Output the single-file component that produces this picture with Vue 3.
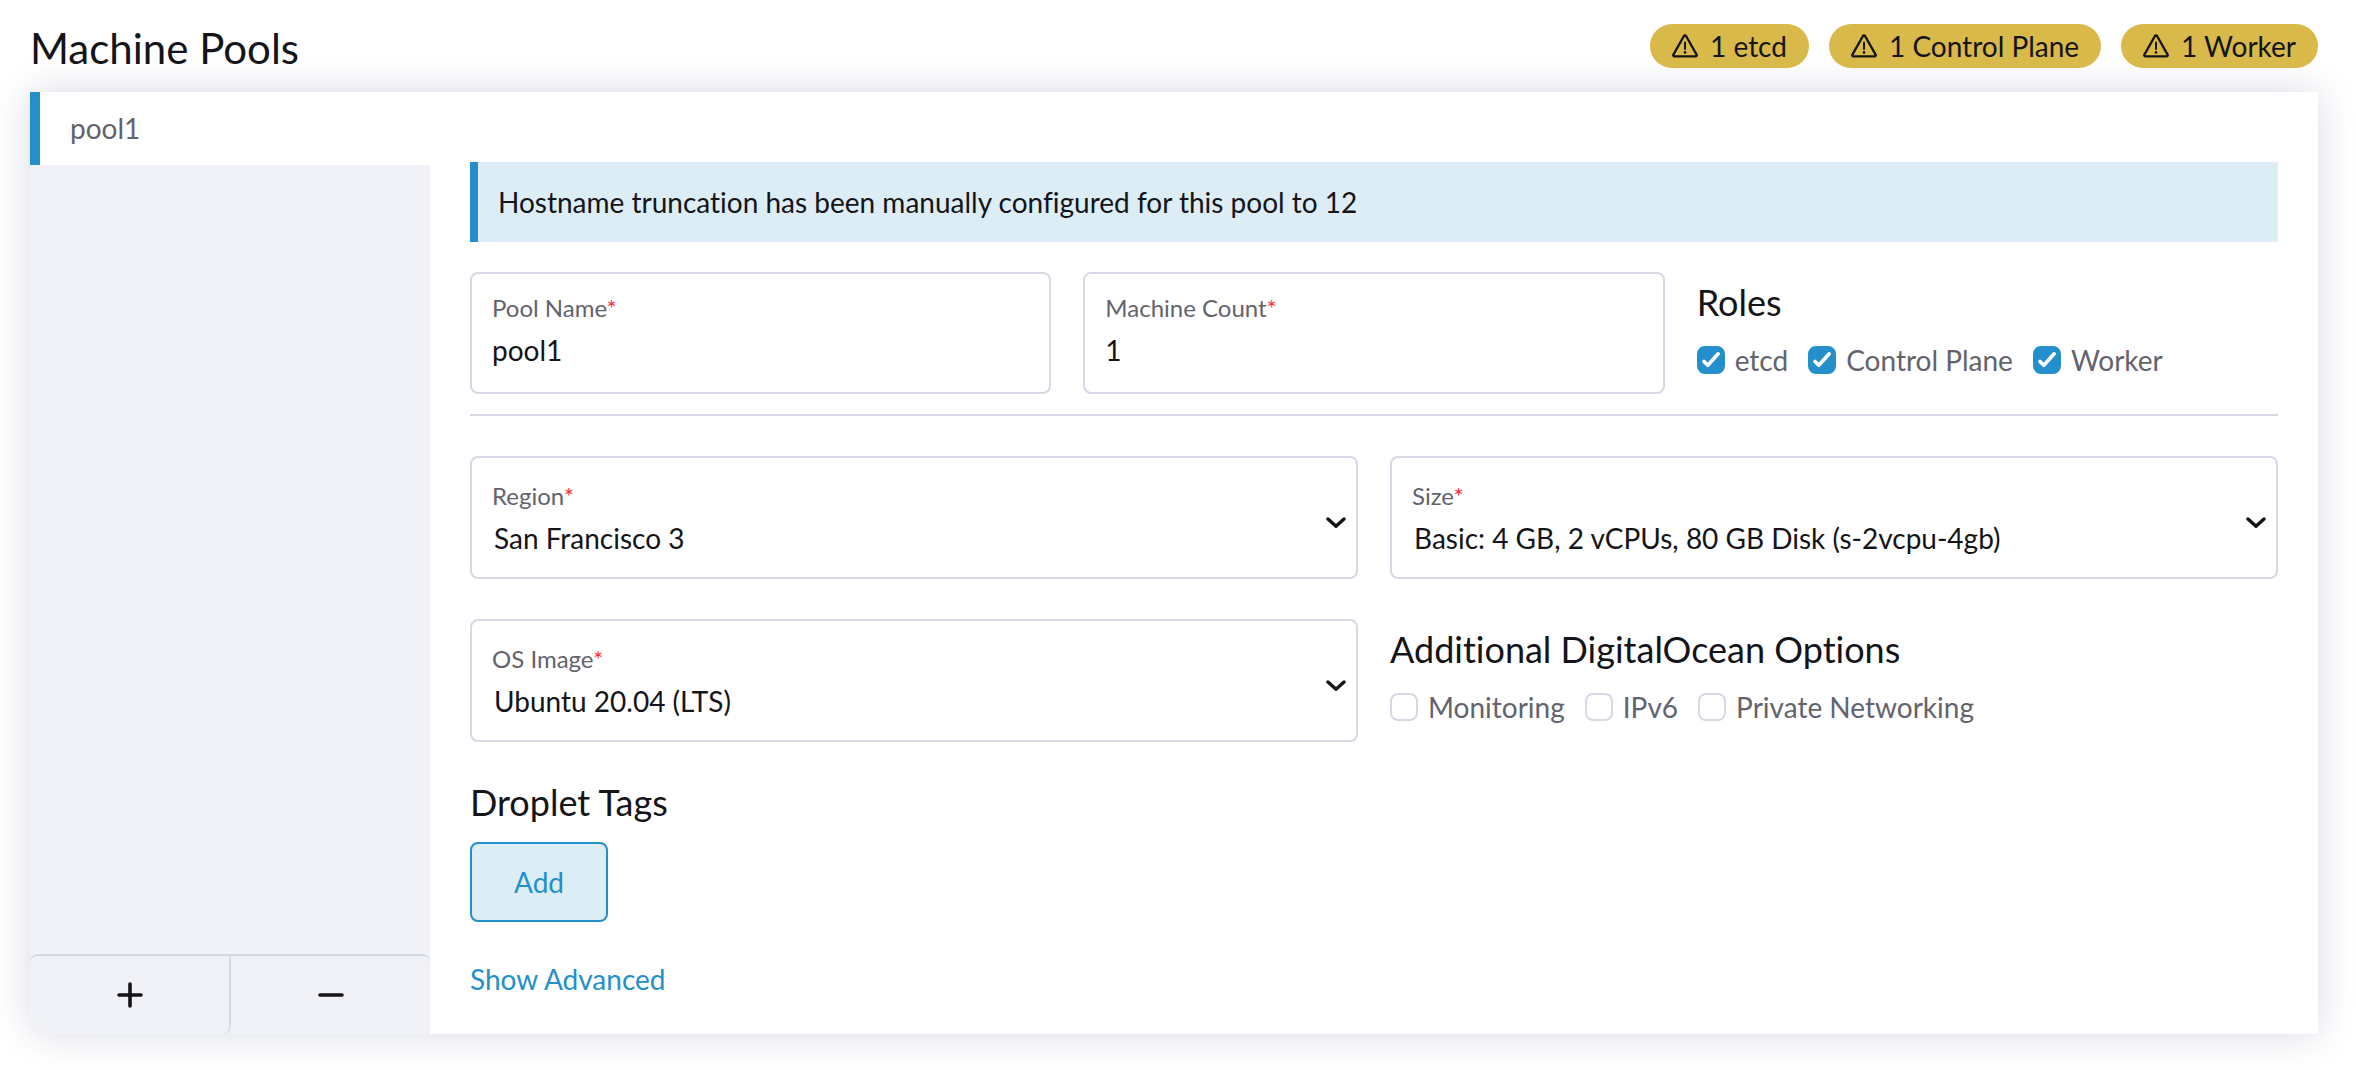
<script setup>
import { ref, reactive } from 'vue'

const badges = ['1 etcd', '1 Control Plane', '1 Worker']

const poolName = ref('pool1')
const machineCount = ref('1')
const region = ref('San Francisco 3')
const size = ref('Basic: 4 GB, 2 vCPUs, 80 GB Disk (s-2vcpu-4gb)')
const image = ref('Ubuntu 20.04 (LTS)')

const roles = reactive([
  { label: 'etcd', on: true },
  { label: 'Control Plane', on: true },
  { label: 'Worker', on: true },
])
const options = reactive([
  { label: 'Monitoring', on: false },
  { label: 'IPv6', on: false },
  { label: 'Private Networking', on: false },
])
</script>

<template>
  <main class="page">
    <header class="header">
      <h2>Machine Pools</h2>
      <ul class="badges">
        <li v-for="badge in badges" :key="badge" class="badge">
          <svg width="26" height="24" viewBox="0 0 26 24" fill="none" aria-hidden="true">
            <path d="M11.8 2.2a1.4 1.4 0 0 1 2.4 0L24.6 20.6a1.2 1.2 0 0 1-1 1.8H2.4a1.2 1.2 0 0 1-1-1.8Z" stroke="currentColor" stroke-width="2.3" stroke-linejoin="round" />
            <path d="M13 8.5v6.5" stroke="currentColor" stroke-width="2" stroke-linecap="round" />
            <circle cx="13" cy="18.4" r="1.3" fill="currentColor" />
          </svg>
          {{ badge }}
        </li>
      </ul>
    </header>

    <div class="panel">
      <nav class="side" aria-label="Pools">
        <a class="tab" href="#pool1">pool1</a>
        <div class="side-actions">
          <button type="button" class="add-pool" aria-label="Add pool">
            <svg width="26" height="26" viewBox="0 0 26 26" aria-hidden="true">
              <path d="M13 2v22M2 13h22" stroke="currentColor" stroke-width="3.6" stroke-linecap="round" />
            </svg>
          </button>
          <button type="button" class="remove-pool" aria-label="Remove pool">
            <svg width="26" height="26" viewBox="0 0 26 26" aria-hidden="true">
              <path d="M2 13h22" stroke="currentColor" stroke-width="3.6" stroke-linecap="round" />
            </svg>
          </button>
        </div>
      </nav>

      <section class="content">
        <div class="banner">Hostname truncation has been manually configured for this pool to 12</div>

        <div class="row thirds">
          <div class="field">
            <label for="pool-name">Pool Name<span class="req">*</span></label>
            <input id="pool-name" v-model="poolName" type="text" />
          </div>
          <div class="field">
            <label for="machine-count">Machine Count<span class="req">*</span></label>
            <input id="machine-count" v-model="machineCount" type="text" inputmode="numeric" />
          </div>
          <div class="group">
            <h3>Roles</h3>
            <div class="checks">
              <label v-for="role in roles" :key="role.label" class="check">
                <input v-model="role.on" type="checkbox" />
                <svg class="tick" viewBox="0 0 28 28" aria-hidden="true">
                  <path d="M7 15.5 10.8 19.3 21.2 7.8" />
                </svg>
                {{ role.label }}
              </label>
            </div>
          </div>
        </div>

        <hr />

        <div class="row halves">
          <div class="field select">
            <label for="region">Region<span class="req">*</span></label>
            <select id="region" v-model="region"><option>San Francisco 3</option></select>
            <svg class="chevron" viewBox="0 0 20 12" aria-hidden="true"><path d="M2 2 10 9.2 18 2" /></svg>
          </div>
          <div class="field select">
            <label for="size">Size<span class="req">*</span></label>
            <select id="size" v-model="size"><option>Basic: 4 GB, 2 vCPUs, 80 GB Disk (s-2vcpu-4gb)</option></select>
            <svg class="chevron" viewBox="0 0 20 12" aria-hidden="true"><path d="M2 2 10 9.2 18 2" /></svg>
          </div>
          <div class="field select">
            <label for="image">OS Image<span class="req">*</span></label>
            <select id="image" v-model="image"><option>Ubuntu 20.04 (LTS)</option></select>
            <svg class="chevron" viewBox="0 0 20 12" aria-hidden="true"><path d="M2 2 10 9.2 18 2" /></svg>
          </div>
          <div class="group">
            <h3>Additional DigitalOcean Options</h3>
            <div class="checks">
              <label v-for="option in options" :key="option.label" class="check">
                <input v-model="option.on" type="checkbox" />
                <svg class="tick" viewBox="0 0 28 28" aria-hidden="true">
                  <path d="M7 15.5 10.8 19.3 21.2 7.8" />
                </svg>
                {{ option.label }}
              </label>
            </div>
          </div>
        </div>

        <div class="tags">
          <h3>Droplet Tags</h3>
          <button type="button" class="add-tag">Add</button>
        </div>

        <a class="advanced" href="#advanced">Show Advanced</a>
      </section>
    </div>
  </main>
</template>

<style>
body {
  background: #fff;
}
</style>

<style scoped>
.page {
  --text: #141419;
  --muted: #63636d;
  --border: #d6d8e5;
  --primary: #248fca;
  --info: #ddedf5;
  padding: 24px 38px 36px 30px;
  font-family: Lato, "Liberation Sans", sans-serif;
  font-size: 28px;
  line-height: 34px;
  font-variant-ligatures: none;
  color: var(--text);
}
.page * {
  box-sizing: border-box;
}
h2,
h3 {
  margin: 0;
  font-weight: 400;
}
h2 {
  font-size: 42px;
  line-height: 48px;
}
h3 {
  font-size: 36px;
  line-height: 44px;
}
input,
select,
button {
  margin: 0;
  font: inherit;
  color: inherit;
}

.header {
  display: flex;
  justify-content: space-between;
  align-items: flex-start;
  margin-bottom: 20px;
  position: relative;
  z-index: 1;
}
.badges {
  display: flex;
  gap: 20px;
  margin: 0;
  padding: 0;
  list-style: none;
}
.badge {
  display: flex;
  align-items: center;
  gap: 12px;
  height: 44px;
  padding: 0 22px;
  border-radius: 22px;
  background: #d9b949;
}

.panel {
  display: flex;
  background: #fff;
  border-bottom-left-radius: 20px;
  box-shadow: 0 0 40px #d8dae4;
}
.side {
  display: flex;
  flex-direction: column;
  flex: 0 0 400px;
  background: #f1f2f7;
  border-bottom-left-radius: 20px;
}
.tab {
  padding: 19px 30px 20px;
  border-left: 10px solid var(--primary);
  background: #fff;
  color: var(--muted);
  text-decoration: none;
}
.side-actions {
  display: flex;
  margin-top: auto;
}
.side-actions button {
  display: flex;
  flex: 1;
  align-items: center;
  justify-content: center;
  height: 80px;
  padding: 0;
  border: 0 solid var(--border);
  border-top-width: 2px;
  background: transparent;
}
.side-actions .add-pool {
  border-right-width: 2px;
  border-radius: 8px 0 8px 20px;
}
.side-actions .remove-pool {
  border-radius: 0 8px 0 0;
}

.content {
  flex: 1;
  min-width: 0;
  padding: 70px 40px 38px;
}
.banner {
  padding: 23px 20px;
  border-left: 8px solid var(--primary);
  background: var(--info);
}
.row {
  display: grid;
  gap: 40px 32px;
}
.thirds {
  grid-template-columns: repeat(3, minmax(0, 1fr));
  margin-top: 30px;
}
.halves {
  grid-template-columns: repeat(2, minmax(0, 1fr));
}
hr {
  height: 2px;
  margin: 20px 0 40px;
  border: 0;
  background: var(--border);
}
.field {
  display: flex;
  flex-direction: column;
  padding: 17px 20px;
  border: 2px solid var(--border);
  border-radius: 8px;
}
.field label {
  font-size: 24px;
  color: var(--muted);
}
.req {
  color: #ff2f3b;
}
.field input,
.field select {
  width: 100%;
  height: 50px;
  padding: 0;
  border: 0;
  outline: 0;
  background: transparent;
  appearance: none;
}
.select {
  position: relative;
  padding: 21px 20px 14px;
}
.field select {
  padding-left: 2px;
}
.chevron {
  position: absolute;
  right: 10px;
  top: 59px;
  width: 20px;
  height: 12px;
  fill: none;
  stroke: var(--text);
  stroke-width: 3.4;
  stroke-linecap: round;
  stroke-linejoin: round;
  pointer-events: none;
}
.group {
  padding-top: 8px;
}
.checks {
  display: flex;
  gap: 20px;
  margin-top: 18px;
}
.check {
  display: grid;
  grid-template-columns: 28px auto;
  column-gap: 10px;
  align-items: center;
  height: 36px;
  color: var(--muted);
}
.check input {
  grid-area: 1 / 1;
  width: 28px;
  height: 28px;
  border: 2px solid var(--border);
  border-radius: 8px;
  background: #fff;
  appearance: none;
}
.check input:checked {
  border-color: var(--primary);
  background: var(--primary);
}
.tick {
  grid-area: 1 / 1;
  width: 28px;
  height: 28px;
  z-index: 1;
  fill: none;
  stroke: #fff;
  stroke-width: 3.6;
  stroke-linecap: round;
  stroke-linejoin: round;
  pointer-events: none;
  visibility: hidden;
}
.check input:checked + .tick {
  visibility: visible;
}

.tags {
  margin-top: 38px;
}
.add-tag {
  display: block;
  height: 80px;
  margin-top: 18px;
  padding: 0 42px;
  border: 2px solid var(--primary);
  border-radius: 8px;
  background: var(--info);
  color: var(--primary);
}
.advanced {
  display: inline-block;
  margin-top: 40px;
  color: var(--primary);
  text-decoration: none;
  vertical-align: top;
}
</style>
